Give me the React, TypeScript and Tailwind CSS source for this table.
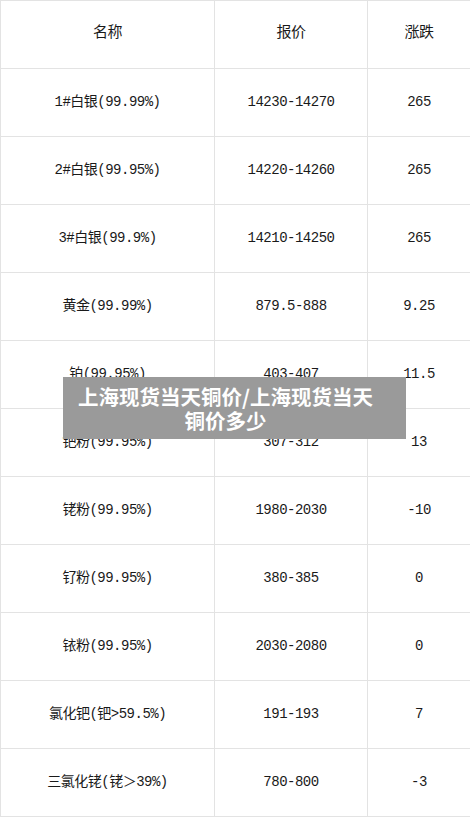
const ROWS: [string, string, string][] = [
  ['1#白银(99.99%)', '14230-14270', '265'],
  ['2#白银(99.95%)', '14220-14260', '265'],
  ['3#白银(99.9%)', '14210-14250', '265'],
  ['黄金(99.99%)', '879.5-888', '9.25'],
  ['铂(99.95%)', '403-407', '11.5'],
  ['钯粉(99.95%)', '307-312', '13'],
  ['铑粉(99.95%)', '1980-2030', '-10'],
  ['钌粉(99.95%)', '380-385', '0'],
  ['铱粉(99.95%)', '2030-2080', '0'],
  ['氯化钯(钯>59.5%)', '191-193', '7'],
  ['三氯化铑(铑＞39%)', '780-800', '-3'],
]

const cell =
  'flex items-center justify-center border-r border-b border-[#e3e3e3] h-[68px] text-[14px] tracking-[-0.5px] text-[#1a1a1a]'

export default function App() {
  return (
    <div
      className="relative w-[470px] h-[817px] bg-white overflow-hidden"
      style={{ fontFamily: '"Liberation Mono", "Noto Sans CJK SC", monospace' }}
    >
      <div className="grid grid-cols-[214px_153px_103px] border-t border-l border-[#e3e3e3]">
        <div className={cell + ' text-[15px]'}>名称</div>
        <div className={cell + ' text-[15px]'}>报价</div>
        <div className={cell + ' text-[15px]'}>涨跌</div>
        {ROWS.map(([name, price, diff]) => (
          <>
            <div key={name + 'a'} className={cell}>{name}</div>
            <div key={name + 'b'} className={cell}>{price}</div>
            <div key={name + 'c'} className={cell}>{diff}</div>
          </>
        ))}
      </div>

      {/* title overlay */}
      <div
        className="absolute left-[63px] top-[377px] w-[343px] h-[62px] bg-[#9a9a9a] pl-[6px] pr-[24px] flex items-center justify-center text-center text-white font-bold text-[20.5px] leading-[24px]"
        style={{ fontFamily: '"Noto Sans CJK SC", sans-serif' }}
      >
        <span>
          上海现货当天铜价/上海现货当天
          <br />
          铜价多少
        </span>
      </div>
    </div>
  )
}
